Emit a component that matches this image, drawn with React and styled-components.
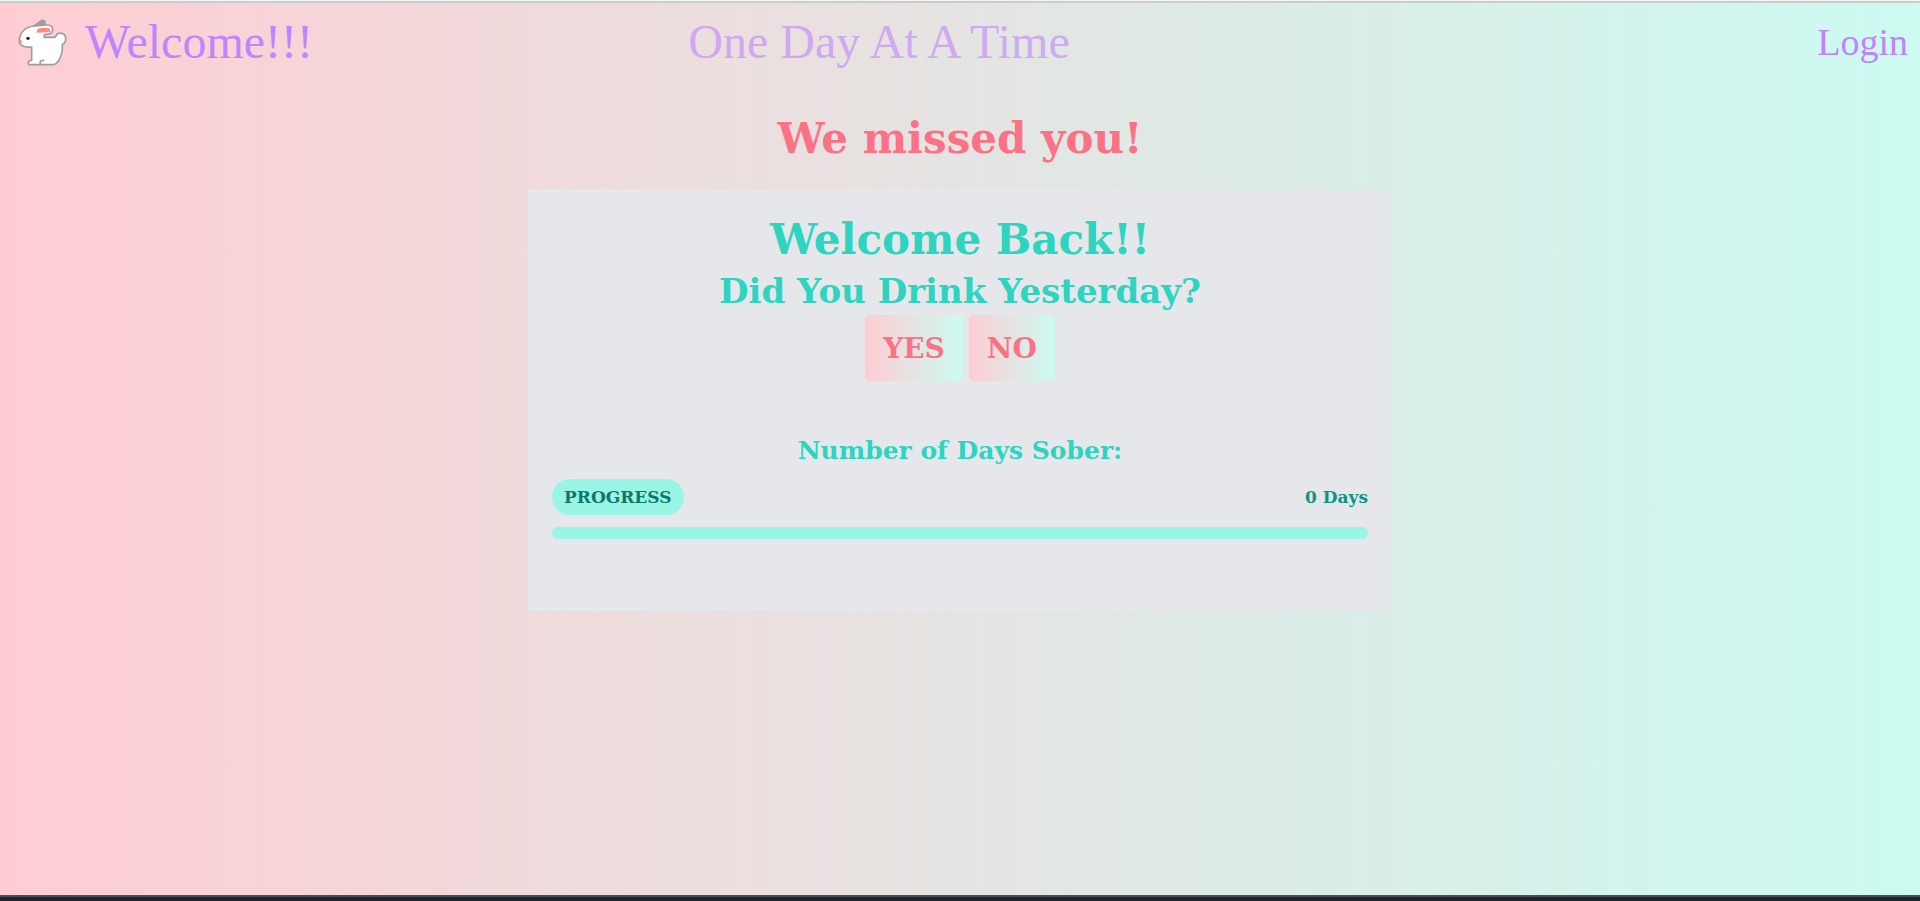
import React from "react";
import styled, { createGlobalStyle } from "styled-components";

const GlobalStyle = createGlobalStyle`
  *, *::before, *::after { box-sizing: border-box; }
  body {
    margin: 0;
    font-family: Georgia, "Liberation Serif", serif;
  }
  h1, h2, h3, p { margin: 0; }
`;

const gradient = "linear-gradient(to right, #fecdd3, #ccfbf1)";
const boldSerif = 'Georgia, "DejaVu Serif", serif';

const Page = styled.div`
  min-height: 100vh;
  display: flex;
  flex-direction: column;
  background: ${gradient};
  border-top: 1px solid #f5f5f5;
`;

const TopBar = styled.header`
  display: grid;
  grid-template-columns: 1fr auto 1fr;
  align-items: center;
  height: 80px;
  padding: 0 12px 0 18px;
  border-top: 2px solid #c8cfcb;
`;

const Brand = styled.a`
  display: flex;
  align-items: center;
  gap: 18px;
  color: #c084fc;
  font-size: 48px;
  line-height: 60px;
  text-decoration: none;
`;

const Slogan = styled.p`
  color: #c084fc;
  opacity: 0.6;
  font-size: 48px;
  line-height: 60px;
  padding-right: 168px;
`;

const LoginLink = styled.a`
  justify-self: end;
  color: #c084fc;
  font-size: 38px;
  line-height: 60px;
  text-decoration: none;
`;

const Main = styled.main`
  flex: 1;
  display: flex;
  flex-direction: column;
  align-items: center;
  padding-top: 28px;
  font-family: ${boldSerif};
`;

const Heading = styled.h1`
  color: #fb7185;
  font-size: 42px;
  line-height: 60px;
`;

const Card = styled.section`
  width: 45%;
  margin-top: 20px;
  padding: 24px 24px 72px;
  background: #e5e7eb;
  text-align: center;
`;

const CardTitle = styled.h2`
  color: #2dd4bf;
  font-size: ${(p) => p.$size}px;
  line-height: ${(p) => p.$line}px;
`;

const Answers = styled.div`
  display: flex;
  justify-content: center;
  gap: 6px;
  margin-bottom: 50px;
`;

const AnswerButton = styled.button`
  height: 66px;
  padding: 0 18px;
  border: 0;
  border-radius: 5px;
  background: ${gradient};
  color: #fb7185;
  font-family: inherit;
  font-size: 28px;
  font-weight: 700;
  cursor: pointer;
`;

const ProgressRow = styled.div`
  display: flex;
  align-items: center;
  justify-content: space-between;
  margin: 8px 0 12px;
`;

const Pill = styled.span`
  padding: 0 12px;
  border-radius: 18px;
  background: #99f6e4;
  color: #0f766e;
  font-size: 17px;
  font-weight: 700;
  line-height: 36px;
`;

const Days = styled.span`
  color: #0d9488;
  font-size: 17px;
  font-weight: 700;
  line-height: 36px;
`;

const Track = styled.div`
  height: 12px;
  border-radius: 6px;
  background: #99f6e4;
`;

const BottomStrip = styled.footer`
  height: 6px;
  border-top: 2px solid #485054;
  background: #20252b;
`;

function Rabbit() {
  return (
    <svg width="49" height="48" viewBox="25 22 147 144" aria-hidden="true">
      <path d="M66 48 L90 30 Q102 22 109 34 L107 48 Z" fill="#9e9e9e" />
      <g fill="#fff" stroke="#9e9e9e" strokeWidth="5" strokeLinejoin="round" strokeLinecap="round">
        <path d="M62 109 C45 110 29 106 29 91 C29 66 47 47 75 46 L114 43 C134 42 135 71 111 71 L104 72 C105 75 104 78 103 80 L134 80 C137 80 138 79 139 76 C146 62 168 66 168 84 C168 94 163 99 158 101 C160 130 147 162 129 162 L58 162 C52 156 57 149 66 149 L66 109 Z" />
        <path d="M93 161 C88 153 93 149 102 149" fill="none" />
      </g>
      <path d="M81 66 C81 55 87 53 94 52 L115 52 C125 52 125 65 115 65 Z" fill="#ff8a80" />
      <circle cx="55" cy="83" r="5" fill="#212121" />
      <path d="M31 89 Q40 89 38 95 L32 98 Z" fill="#ff8a80" />
    </svg>
  );
}

export default function App() {
  return (
    <>
      <GlobalStyle />
      <Page>
        <TopBar>
          <Brand href="#home">
            <Rabbit />
            Welcome!!!
          </Brand>
          <Slogan>One Day At A Time</Slogan>
          <LoginLink href="#login">Login</LoginLink>
        </TopBar>
        <Main>
          <Heading>We missed you!</Heading>
          <Card>
            <CardTitle $size={42} $line={54}>Welcome Back!!</CardTitle>
            <CardTitle as="h3" $size={34} $line={48}>Did You Drink Yesterday?</CardTitle>
            <Answers>
              <AnswerButton type="button">YES</AnswerButton>
              <AnswerButton type="button">NO</AnswerButton>
            </Answers>
            <CardTitle as="h3" $size={25} $line={40}>Number of Days Sober:</CardTitle>
            <ProgressRow>
              <Pill>PROGRESS</Pill>
              <Days>0 Days</Days>
            </ProgressRow>
            <Track role="progressbar" aria-label="Days sober" aria-valuenow={0} />
          </Card>
        </Main>
        <BottomStrip />
      </Page>
    </>
  );
}
